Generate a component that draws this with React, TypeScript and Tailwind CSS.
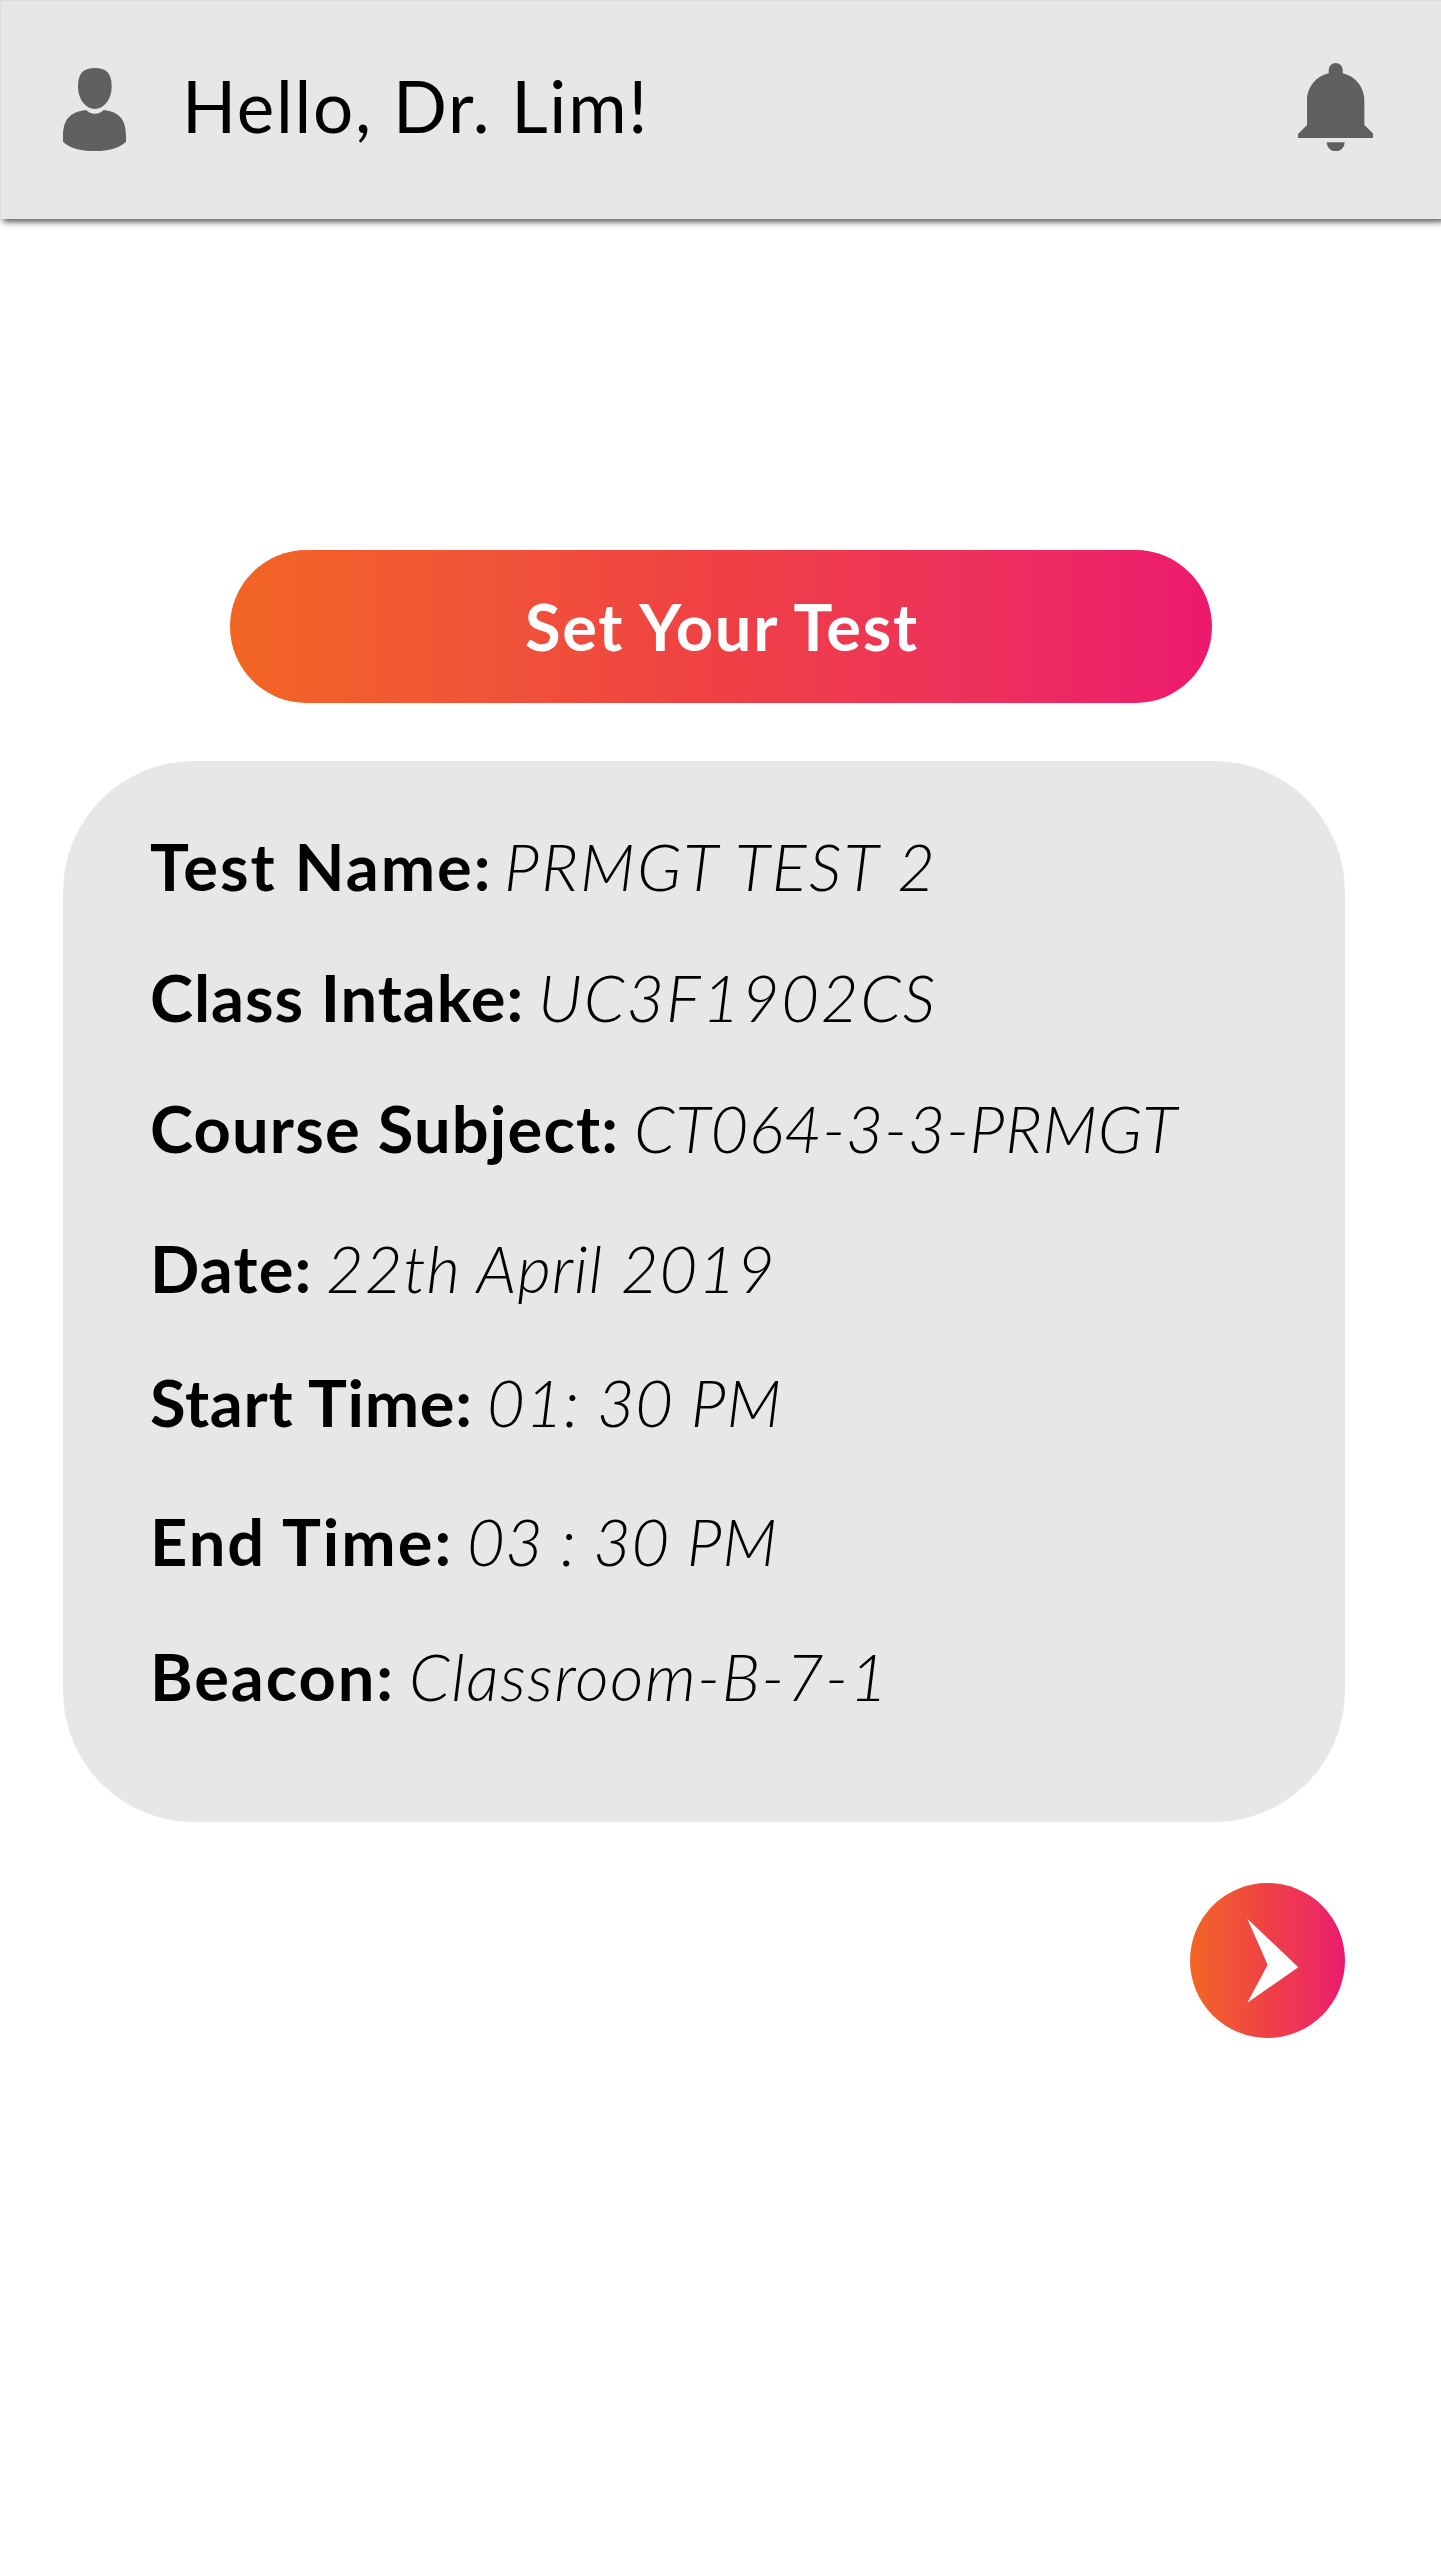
const details = [
  { label: "Test Name:", value: "PRMGT TEST 2", row: "", labelText: "w-[354px] tracking-[2px]", valueText: "tracking-[2.2px]" },
  { label: "Class Intake:", value: "UC3F1902CS", row: "mt-[51px]", labelText: "w-[388px] tracking-[0.95px]", valueText: "tracking-[1.8px]" },
  { label: "Course Subject:", value: "CT064-3-3-PRMGT", row: "mt-[51px]", labelText: "w-[484px] tracking-[1.17px]", valueText: "tracking-[0.52px]" },
  { label: "Date:", value: "22th April 2019", row: "mt-[60px]", labelText: "w-[176px] tracking-[1.2px]", valueText: "tracking-[1px]" },
  { label: "Start Time:", value: "01: 30 PM", row: "mt-[54px]", labelText: "w-[337px] tracking-[0.73px]", valueText: "tracking-[0.7px]" },
  { label: "End Time:", value: "03 : 30 PM", row: "mt-[59px]", labelText: "w-[317px] tracking-[2px]", valueText: "tracking-[0.55px]" },
  { label: "Beacon:", value: "Classroom-B-7-1", row: "mt-[55px]", labelText: "w-[259px] tracking-[1.9px]", valueText: "tracking-[1.45px]" },
];

function PersonIcon() {
  return (
    <svg viewBox="0 0 189 249" className="h-[83px] w-[63px] shrink-0 fill-[#606060]">
      <path d="M95.5 0C128 0 146 14 146 55C146 98 120 123 95.5 123C71 123 45 98 45 55C45 14 63 0 95.5 0Z" />
      <path d="M69 126Q80 137 95 137Q112 137 122 126C170 132 189 155 189 205V221Q160 249 95 249Q28 249 0 221V205C0 155 20 132 69 126Z" />
    </svg>
  );
}

function BellIcon() {
  return (
    <svg viewBox="0 0 226 265" className="h-[88.3px] w-[75.4px] shrink-0 fill-[#606060]">
      <path d="M92 31V21A21 21 0 0 1 134 21V31C172 40 199 72 199 113V186L226 213V225H0V213L27 186V113C27 72 54 40 92 31Z" />
      <path d="M86 238H140A27 27 0 0 1 86 238Z" />
    </svg>
  );
}

export default function App() {
  return (
    <div className="flex h-[2561px] w-[1441px] flex-col overflow-hidden bg-white font-['Lato',sans-serif] text-black">
      <header className="flex h-[219px] shrink-0 items-start border-l border-t border-[#dcdddf] bg-[#e6e7e9] pl-[62px] pr-[68px] shadow-[3px_3px_6px_rgba(0,0,0,0.65)]">
        <div className="mt-[67px]">
          <PersonIcon />
        </div>
        <h1 className="ml-[56px] mt-[60px] whitespace-nowrap text-[71px] font-normal leading-[90px] tracking-[1.75px]">
          Hello, Dr. Lim!
        </h1>
        <div className="ml-auto mt-[62px]">
          <BellIcon />
        </div>
      </header>

      <main className="flex flex-col">
        <button className="mt-[331px] flex h-[153px] w-[982px] justify-center self-center rounded-full bg-linear-to-r from-[#f26522] via-[#ef4044] to-[#ec186e] pl-[3px] pt-[36px] text-[65px] font-bold leading-[80px] tracking-[1.75px] text-white">
          Set Your Test
        </button>

        <section className="ml-[63px] mt-[58px] h-[1061px] w-[1282px] rounded-[131px] bg-[#e6e7e9] pl-[87px] pt-[65px] text-[65px] leading-[80px]">
          {details.map((d) => (
            <div key={d.label} className={`flex whitespace-nowrap ${d.row}`}>
              <span className={`shrink-0 font-bold ${d.labelText}`}>{d.label}</span>
              <span className={`font-light italic ${d.valueText}`}>{d.value}</span>
            </div>
          ))}
        </section>

        <button aria-label="Next" className="ml-[1190px] mt-[61px] size-[155px] rounded-full bg-linear-to-r from-[#f26522] via-[#ef4044] to-[#ec186e]">
          <svg viewBox="0 0 465 465" className="size-full fill-white">
            <path d="M172 107L325 253L172 359L233 245Z" />
          </svg>
        </button>
      </main>
    </div>
  );
}
